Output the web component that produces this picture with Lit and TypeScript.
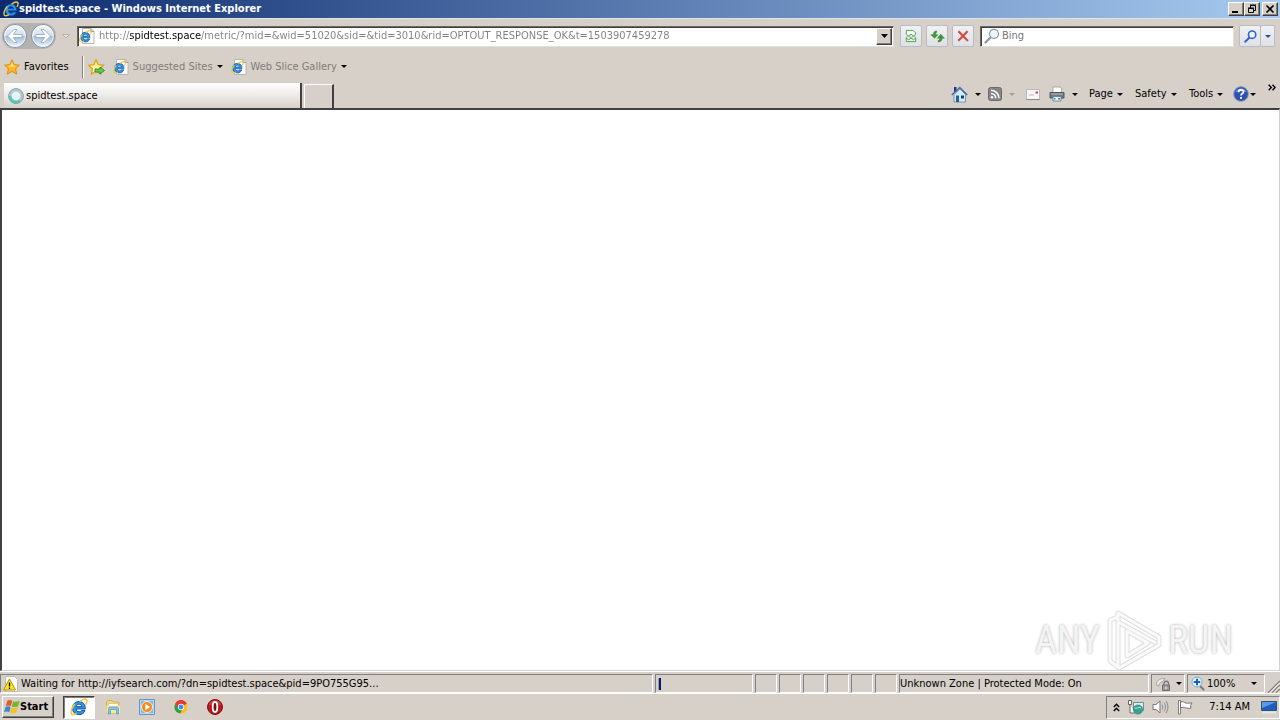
import { LitElement, html, svg, css } from "lit";
import { customElement, state } from "lit/decorators.js";

const icon = (w: number, h: number, body: unknown, vw = w, vh = h) =>
  html`<svg class="ico" width=${w} height=${h} viewBox="0 0 ${vw} ${vh}" aria-hidden="true">${body}</svg>`;

const ieMark = svg`
  <path d="M13.600 9.800H5.400c.2 1.500 1.200 2.400 2.700 2.400 1 0 1.700-.4 2.200-1.100h3c-.8 2.400-2.700 3.700-5.300 3.700C4.600 14.800 2.200 12.500 2.200 9c0-3.400 2.400-5.900 5.800-5.900 3.600 0 5.800 2.600 5.600 6.700zM5.500 7.600h5C10.300 6.300 9.400 5.500 8 5.500s-2.200.8-2.500 2.100z" fill="#2f93e6" stroke="#0b4a98" stroke-width=".8"/>
  <path d="M4.200 5.300C2 8.300.3 12 1.300 14c.8 1.400 2.900.8 4.700-.4M8.500 3.200C11 1.300 13.800.5 14.800 1.700c.7.900.2 2.300-.8 4.100" fill="none" stroke="#f2c938" stroke-width="1.400"/>`;

const ie = (s: number) => icon(s, s, ieMark, 16, 16);

const iePage = () => icon(16, 16, svg`
  <path d="M3.500.5h8.500l3 3v12H3.500z" fill="#fdfdfd" stroke="#b5b5b5"/>
  <path d="M12 .5v3h3" fill="#ddd" stroke="#9a9a9a"/>
  <g transform="translate(-.2 1.800) scale(.82)">${ieMark}</g>`);

const caret = (color = "#000") => icon(6, 3, svg`<path d="M0 0h6L3 3z" fill=${color}/>`);

const starPath = "M8 .8l2.200 4.800 5.200.6-3.800 3.600 1 5.200L8 12.400 3.400 15l1-5.200L.6 6.200l5.200-.6z";
const star = () => icon(16, 16, svg`<path d=${starPath} fill="#fbb829" stroke="#dc8a0c"/><path d="M8 3l1.400 3.500 3.600.5-5 1-4.500-1 3-.5z" fill="#ffe07a"/>`);
const starAdd = () => icon(17, 16, svg`<path d=${starPath} fill="#fff0a0" stroke="#dfa10e" stroke-width="1.200"/><path d="M7 10h5V8l4.500 3.500L12 15v-2H7z" fill="#5ed04e" stroke="#1f7d1c" stroke-width=".8"/>`);

const navCircle = (flip: boolean) => icon(26, 26, svg`
  <defs><linearGradient id="orb" x1="0" y1="0" x2="0" y2="1"><stop offset="0" stop-color="#f4f7fb"/><stop offset=".48" stop-color="#d3dfec"/><stop offset=".52" stop-color="#a5bdd6"/><stop offset="1" stop-color="#edf9ff"/></linearGradient></defs>
  <circle cx="13" cy="13" r="11.500" fill="url(#orb)" stroke="#8590a2"/>
  <circle cx="13" cy="13" r="10.400" fill="none" stroke="#fff" stroke-opacity=".8"/>
  <path transform=${flip ? "translate(26 0) scale(-1 1)" : ""} d="M5.500 13l6.500-6.500h3L11.300 11.500H20v3h-8.700l3.700 5h-3z" fill="#fff" stroke="#8fa3bb" stroke-width=".8"/>`);

const compat = () => icon(12, 14, svg`<path d="M1.500 6V1.500h8l3 3V6l-2.500 2-3-2-3 2zM1.500 10.500L4 12.500l3-2 3 2 2.500-2v4h-11z" fill="#f3fbf0" stroke="#3f9a3c"/><path d="M1 10l3-2 3 2.500 3-2.500 3 2" fill="none" stroke="#64b15c"/>`, 14, 16);
const refresh = () => icon(15, 13, svg`<path d="M7 1C4.500 1 3.500 2.500 3.500 5H.8l4 4L8.600 5H6c0-1.500.2-2 1.500-2.500zM9 13c2.500 0 4-1.500 4-4h2.500L11.500 4.500 7.700 9h2.600c0 1.500-.3 2-1.800 2.500z" fill="#3b9b35" stroke="#1f6f1d" stroke-width=".4"/>`, 16, 14);
const stop = () => icon(12, 12, svg`<path d="M1 2l1.200-1.300L6 4.700 9.800.7 11 2 7.200 6 11.400 10.200 10.200 11.300 6 7.300 2 11.300.8 10 4.800 6z" fill="#d9433b" stroke="#b33a35" stroke-width=".4"/>`);
const lens = (stroke: string, s: number, w = 1.6) => icon(s, s, svg`<path d="M1.500 14.500L6.500 9.500" stroke=${stroke} stroke-width="2.300" stroke-linecap="round"/><circle cx="10" cy="5.800" r="4.500" fill="#eef6fd" stroke=${stroke} stroke-width=${w}/>`, 16, 16);
const spinner = () => icon(16, 16, svg`<circle cx="8" cy="8" r="6" fill="#e8f4f4" stroke="#b3c4cc" stroke-width="3"/><path d="M2 8a6 6 0 0 0 10 4.500" fill="none" stroke="#4fc9b8" stroke-width="2.600"/><circle cx="8" cy="8" r="7.500" fill="none" stroke="#6c9aa6" stroke-width=".7"/>`);

const home = () => icon(17, 17, svg`<path d="M3 1h2.500v5H3z" fill="#2b2f8c"/><path d="M3 8.500L9 3l5.500 5.500V16H3z" fill="#d5ebfa" stroke="#5b87ae" stroke-width=".8"/><path d="M.8 9L8.800 1.500 16.200 9" fill="none" stroke="#4c6ca8" stroke-width="1.600"/><path d="M5 9.500h3V16H5z" fill="#2d5c96"/><path d="M10 9.500h3v3h-3z" fill="#17406f"/>`);
const rss = () => icon(14, 14, svg`<rect x=".5" y=".5" width="13" height="13" rx="2" fill="#858585" stroke="#6c6c6c"/><circle cx="4" cy="10.200" r="1.300" fill="#fff"/><path d="M3 6.500c2.600 0 4.700 2 4.700 4.800M3 3.300c4.500 0 7.900 3.500 7.900 8" fill="none" stroke="#fff" stroke-width="1.500"/>`);
const mail = () => icon(14, 11, svg`<path d="M.5.5h13v10H.5z" fill="#f7f7f7" stroke="#b9b9b9"/><path d="M.5 10.500h13" stroke="#888"/><path d="M9.500 2.500h2.500v2H9.500z" fill="#cf4255"/><path d="M3 6h5" stroke="#bbb"/>`);
const printer = () => icon(16, 16, svg`<path d="M4 1h7l1.500 1.500V7H4z" fill="#fff" stroke="#999" stroke-width=".8"/><path d="M1 6.500h14v5.500H1z" fill="#737b82" stroke="#4e565d"/><path d="M2 8h12" stroke="#b6bdc2"/><path d="M4 10.500h8v4.500H4z" fill="#e5f4ff" stroke="#667887" stroke-width=".8"/><path d="M5 12h1.500v1.500H5zM9 12h2v1.500H9z" fill="#2f87c9"/>`);
const help = () => icon(16, 16, svg`<circle cx="8" cy="8" r="7.300" fill="#2c51b4" stroke="#8794b3"/><path d="M2.500 6a6 6 0 0 1 11 0c-3-1-8-1-11 0z" fill="#7d9ae4"/><path d="M5.600 6.200C5.600 4.600 6.600 3.900 8 3.900s2.500.8 2.500 2C10.500 7.500 8 7.600 8 9.500" fill="none" stroke="#fff" stroke-width="1.700"/><circle cx="8" cy="11.900" r="1.100" fill="#fff"/>`);
const more = () => icon(8, 7, svg`<path d="M.7.7L3.300 3.500.7 6.300M4.500.7l2.600 2.800-2.600 2.800" fill="none" stroke="#000" stroke-width="1.400"/>`);

const warn = () => icon(16, 16, svg`<path d="M3.500.5h9l3 3v12h-12z" fill="#fff" stroke="#bbb"/><path d="M7.500 3L13.500 14H1.500z" fill="#ffe81c" stroke="#b09000" stroke-linejoin="round"/><path d="M7.500 6.500v4M7.500 11.500v1.500" stroke="#000" stroke-width="1.300"/>`);
const lock = () => icon(16, 16, svg`<path d="M1 8.500C2 4 6 2 10 2.500L7 6c-2 0-3 2-3 4z" fill="#e9e9e9" stroke="#999" stroke-width=".8"/><path d="M9 9V7.500a2.200 2.200 0 0 1 4.500 0V9" fill="none" stroke="#777" stroke-width="1.300"/><path d="M7.500 9h7v5.500h-7z" fill="#999" stroke="#6f6f6f"/><path d="M11 10.500v2.500" stroke="#fff"/>`);
const zoomPlus = () => icon(14, 15, svg`<path d="M8.500 9.500l4 4" stroke="#7c7c7c" stroke-width="2.200" stroke-linecap="round"/><circle cx="6" cy="6" r="5" fill="#e4f2fd" stroke="#78a8d6"/><path d="M6 2.800v6.400M2.800 6h6.400" stroke="#145fbd" stroke-width="2"/>`);
const grip = () => icon(13, 13, svg`<path d="M1 13L13 1M5 13l8-8M9 13l4-4" stroke="#858078" stroke-width="1.500"/><path d="M2.500 13L13 2.500M6.500 13L13 6.500M10.500 13l2.500-2.500" stroke="#fff"/>`);

const winFlag = () => icon(16, 16, svg`<path d="M3.300 1.800C5 .8 6.800 1 8.300 1.800L6.900 7C5.300 6.200 3.500 6.200 1.800 7z" fill="#e9592b"/><path d="M9.100 2.200c2 1 4 .9 6.600-.4l-1.500 5.400c-2.200 1.100-4.500 1.100-6.500.2z" fill="#72b92c"/><path d="M1.500 8c1.800-.9 3.600-.9 5.100-.1l-1.400 5.300c-1.600-.9-3.400-.9-5.200 0z" fill="#3b86d6"/><path d="M7.400 8.400c2 1 4.300.9 6.500-.2l-1.500 5.300c-2.200 1.100-4.400 1.100-6.400.1z" fill="#f6c21c"/>`);
const folder = () => icon(16, 16, svg`<path d="M1.500 3.500L3 1.500h4l1 1.500h6v11h-12.500z" fill="#f6d976" stroke="#c9a544" stroke-width=".8"/><path d="M3.500 4.500h9.500v3H3.500z" fill="#fff" stroke="#c9b676" stroke-width=".6"/><path d="M1.500 6.500h13.500V14H1.500z" fill="#fbe89f"/><path d="M3.500 15V9.500c0-1 .7-1.500 1.500-1.500h7c.8 0 1.500.5 1.500 1.500V15h-2v-4.500h-6V15z" fill="#86c5ea" stroke="#4f9ac9" stroke-width=".7"/>`);
const media = () => icon(16, 16, svg`<path d="M.5.5h15v15H.5z" fill="#b9dcf6" stroke="#5c97c8"/><path d="M2 2h12v12H2z" fill="#7fb7e2"/><circle cx="8" cy="8" r="5.500" fill="#f58a16" stroke="#fff" stroke-width=".8"/><path d="M6.300 4.800L11.200 8l-4.900 3.200z" fill="#fff"/>`);
const chrome = () => icon(14, 14, svg`<circle cx="8" cy="8" r="7.500" fill="#fbc116"/><path d="M8 8L1.500 4.250A7.500 7.500 0 0 1 14.500 4.250z" fill="#e33b2e"/><path d="M1.500 4.250A7.500 7.500 0 0 0 7 15.450L10.500 9.500 8 8z" fill="#2aa24c"/><path d="M8 4.300h6.500a7 7 0 0 0-13-.05L5 10z" fill="#e33b2e"/><circle cx="8" cy="8" r="3.600" fill="#fff"/><circle cx="8" cy="8" r="2.800" fill="#4688f1"/>`, 16, 16);
const opera = () => icon(16, 16, svg`<circle cx="8" cy="8" r="7.500" fill="#b61a1e" stroke="#861013"/><path d="M2 6a6.300 6.300 0 0 1 12 0z" fill="#dd5a58" opacity=".6"/><ellipse cx="8" cy="8" rx="2.300" ry="5" fill="#7c0c10" stroke="#fff" stroke-width="1.800"/>`);

const net = () => icon(16, 16, svg`<path d="M5.500 3.500h10v8h-10z" fill="#ddf1f2" stroke="#6e8c90"/><path d="M.5 1.500h3v4h-3zM2 5.500V14h5" fill="#fff" stroke="#666"/><circle cx="10" cy="10.500" r="4.600" fill="#38a390" stroke="#277b70" stroke-width=".6"/><path d="M6.500 9c2 1.500 4-2 6.500 0" stroke="#c9eee1" fill="none"/>`);
const speaker = () => icon(17, 16, svg`<path d="M1 5.500h3L8 2v12l-4-3.500H1z" fill="#fff" stroke="#777"/><path d="M10 5.500c1 1.500 1 3.500 0 5M12 3.500c2 2.700 2 6.300 0 9M14 2c2.600 3.500 2.600 8.500 0 12" fill="none" stroke="#888"/>`);
const flag = () => icon(16, 16, svg`<path d="M1.500 1.500h2V15h-2z" fill="#fff" stroke="#666" stroke-width=".8"/><path d="M3.500 3c2.500-1 4 .5 5.500 1s3.500 0 6 0l-1.500 2.500L14 9c-2.500.8-4 .2-5.500-.3S6 8 3.500 8.700z" fill="#fff" stroke="#666" stroke-width=".9"/>`);
const desktop = () => icon(16, 14, svg`<path d="M.5 1.500h15v9H.5z" fill="#1d5fc0" stroke="#3d4d63"/><path d="M1 2h14L1 8z" fill="#5b9ce8"/><path d="M1 12.500h14" stroke="#dfe6ee" stroke-width="2"/>`);
const emblem = "M13 4L54 28v8L14 59 5 52V11l8-3zM13 4v54M13 13l38 21M22 22v25l21-13z";

@customElement("app-root")
export class AppRoot extends LitElement {
  @state() private address =
    "http://spidtest.space/metric/?mid=&wid=51020&sid=&tid=3010&rid=OPTOUT_RESPONSE_OK&t=1503907459278";

  static styles = css`
    :host { display: flex; flex-direction: column; height: 100vh; overflow: hidden; background: #d6d0c8;
      color: #000; font: 11px/14px "DejaVu Sans Condensed", "DejaVu Sans", sans-serif; }
    * { box-sizing: border-box; }
    button, input { font: inherit; color: inherit; margin: 0; padding: 0; border: 0; background: none; border-radius: 0; }
    button { display: flex; align-items: center; white-space: nowrap; }
    .ico { display: block; flex: none; }
    input { outline: none; min-width: 0; }

    .title { display: flex; align-items: center; height: 18px; padding: 0 2px 0 3px; color: #fff; font-weight: bold;
      background: linear-gradient(90deg, #0c2b6f, #a6caf0); }
    .title h1 { flex: 1; margin: 0; font: inherit; }
    .win { display: flex; }
    .win button { width: 16px; height: 14px; justify-content: center; background: #d6d0c8; border: 1px solid;
      border-color: #fff #404040 #404040 #fff; box-shadow: inset -1px -1px #808080; }
    .win .close { margin-left: 2px; }

    .nav { display: flex; align-items: center; height: 35px; padding: 0 5px 0 2px; border-top: 1px solid #dfe5ee; }
    .orbs { display: flex; gap: 2px; border-radius: 14px; background: #b5b2b3; }
    .history { padding: 0 7px 0 6px; }
    .address, .search { display: flex; align-items: center; height: 21px; background: #fff; border: 1px solid;
      border-color: #6b6862 #e2ded8 #e2ded8 #6b6862; box-shadow: inset 1px 1px #404040; }
    .address { flex: 1; padding: 1px 1px 1px 1px; gap: 4px; }
    .address input { flex: 1; color: transparent; -webkit-background-clip: text; background-clip: text;
      background-image: linear-gradient(90deg, #808080 30px, #000 30px 102px, #808080 102px); }
    .drop { width: 16px; height: 17px; justify-content: center; background: #d6d0c8; border: 1px solid;
      border-color: #fff #404040 #404040 #fff; box-shadow: inset -1px -1px #808080; }
    .tools { display: flex; gap: 4px; padding: 0 6px; }
    .tool { width: 22px; height: 22px; justify-content: center; border: 1px solid #b9bcc2; border-radius: 2px;
      background: linear-gradient(#f1f1f3, #dfe1e6); }
    .search { width: 254px; padding: 1px 3px; gap: 2px; }
    .search input { flex: 1; }
    .search input::placeholder { color: #777; opacity: 1; }
    .go { display: flex; margin-left: 5px; }
    .go .tool + .tool { width: 14px; border-left: 0; }

    .favs { display: flex; align-items: center; height: 27px; padding: 0 4px; color: #807c77; }
    .favs button { gap: 4px; }
    .favs .main { color: #000; padding-right: 13px; }
    .favs .links { display: flex; align-items: center; height: 22px; border-left: 1px solid #808080;
      box-shadow: inset 1px 0 #fff; padding-left: 5px; gap: 8px; }

    .tabs { display: flex; align-items: flex-end; height: 28px; padding: 0 4px; }
    .tab { width: 298px; height: 25px; padding-left: 4px; gap: 2px; border-right: 2px solid #404040;
      background: linear-gradient(#fff, #e9e6e2 60%, #d6d0c8); }
    .newtab { width: 30px; height: 24px; margin-left: 2px; border: 1px solid #fff; border-right: 2px solid #404040; border-bottom: 0; }
    .cmds { display: grid; grid-template-columns: 37px 38px 23px 40px 46px 54px 44px 35px 8px; margin-left: auto;
      height: 28px; align-items: center; }
    .cmds button { gap: 4px; }
    .cmds .wide { gap: 7px; }
    .cmds .tight { gap: 1px; }
    .cmds .more { align-self: start; padding-top: 4px; }

    .view { position: relative; flex: 1; min-height: 0; background: #fff; border: 1px solid #808080;
      border-top: 2px solid #404040; border-left: 2px solid #404040; border-right-color: #d6d0c8; border-bottom-color: #d6d0c8; }
    .mark { position: absolute; right: 46px; bottom: -1px; display: flex; align-items: center; gap: 5px; color: #f4f4f4;
      font: 38px/60px "Roboto Condensed", "Liberation Sans Narrow", "Liberation Sans", sans-serif;
      text-shadow: 0 0 3px #aaa; }

    .status { display: grid; grid-template-columns: minmax(0, 1fr) 98px repeat(6, 22px) 250px 34px 78px 13px; column-gap: 2px;
      height: 22px; padding: 2px 0 0; border-top: 1px solid #fff; }
    .pane { display: flex; align-items: center; gap: 3px; min-width: 0; overflow: hidden; white-space: nowrap;
      border: 1px solid; border-color: #808080 #fff #fff #808080; }
    .pane.first { padding-left: 1px; }
    .pane.part { padding-left: 3px; }
    .pane button { gap: 5px; width: 100%; }
    .pane .zoom { justify-content: space-between; padding-right: 7px; }
    .zoom span { display: flex; align-items: center; gap: 2px; }
    .bar { width: 2px; height: 12px; background: #101a55; box-shadow: -1px 0 #8e98d4; }
    .grip { align-self: end; }

    .task { display: flex; align-items: center; height: 27px; padding: 1px 0 1px 2px; border-top: 1px solid #fff; }
    .start { height: 22px; width: 52px; padding-left: 1px; font-weight: bold; border: 1px solid;
      border-color: #fff #404040 #404040 #fff; box-shadow: inset -1px -1px #808080; }
    .apps { display: flex; gap: 2px; margin-left: 9px; }
    .apps button { width: 32px; height: 23px; justify-content: center; }
    .apps .on { background: #fff; border: 1px solid; border-color: #404040 #fff #fff #404040; box-shadow: inset 1px 1px #808080; }
    .tray { display: flex; align-items: center; gap: 8px; height: 23px; margin-left: auto; padding: 0 2px 0 6px; border: 1px solid;
      border-color: #808080 #fff #fff #808080; }
    .tray time { padding: 0 3px 0 8px; }
  `;

  private edit(e: Event) {
    this.address = (e.target as HTMLInputElement).value;
  }

  render() {
    return html`
      <header class="title">
        ${ie(16)}
        <h1>spidtest.space - Windows Internet Explorer</h1>
        <div class="win">
          <button aria-label="Minimize">${icon(10, 10, svg`<path d="M1 7h6v2H1z"/>`)}</button>
          <button aria-label="Restore">${icon(10, 10, svg`<path d="M3.500 4V1.500h5v5H7M3 1h6M1.500 4.500h5v4h-5zM1 4h6" fill="none" stroke="#000"/>`)}</button>
          <button class="close" aria-label="Close">${icon(10, 10, svg`<path d="M1.500 1.500l7 7M8.500 1.500l-7 7" stroke="#000" stroke-width="1.700"/>`)}</button>
        </div>
      </header>

      <nav class="nav">
        <div class="orbs">
          <button aria-label="Back">${navCircle(false)}</button>
          <button aria-label="Forward">${navCircle(true)}</button>
        </div>
        <button class="history" aria-label="Recent pages">${icon(8, 5, svg`<path d="M.5.5h7L4 4z" fill="#e6e2dc" stroke="#aaa69f" stroke-width=".8"/>`)}</button>
        <div class="address">
          ${iePage()}
          <input aria-label="Address" spellcheck="false" .value=${this.address} @input=${this.edit} />
          <button class="drop" aria-label="Show addresses">${icon(7, 4, svg`<path d="M0 0h7L3.500 4z"/>`)}</button>
        </div>
        <div class="tools">
          <button class="tool" aria-label="Compatibility view">${compat()}</button>
          <button class="tool" aria-label="Refresh">${refresh()}</button>
          <button class="tool" aria-label="Stop">${stop()}</button>
        </div>
        <div class="search">
          ${lens("#8b98a6", 16, 1.2)}
          <input aria-label="Search" placeholder="Bing" />
        </div>
        <div class="go">
          <button class="tool" aria-label="Search">${lens("#2a63cf", 13, 2)}</button>
          <button class="tool" aria-label="Search options">${caret("#1f4fa8")}</button>
        </div>
      </nav>

      <div class="favs">
        <button class="main">${star()}Favorites</button>
        <div class="links">
          <button aria-label="Add to favorites bar">${starAdd()}</button>
          <button>${iePage()}Suggested Sites ${caret()}</button>
          <button>${iePage()}Web Slice Gallery ${caret()}</button>
        </div>
      </div>

      <div class="tabs">
        <button class="tab">${spinner()}spidtest.space</button>
        <button class="newtab" aria-label="New tab"></button>
        <div class="cmds">
          <button class="wide" aria-label="Home">${home()}${caret()}</button>
          <button class="wide" aria-label="Feeds">${rss()}${caret("#a39e97")}</button>
          <button aria-label="Read mail">${mail()}</button>
          <button class="wide" aria-label="Print">${printer()}${caret()}</button>
          <button>Page ${caret()}</button>
          <button>Safety ${caret()}</button>
          <button>Tools ${caret()}</button>
          <button class="tight" aria-label="Help">${help()}${caret()}</button>
          <button class="more" aria-label="More">${more()}</button>
        </div>
      </div>

      <main class="view">
        <div class="mark">
          <span>ANY</span>
          ${icon(58, 62, svg`
            <g fill="none" stroke-linejoin="round">
              <path d=${emblem} stroke="#dedede" stroke-width="5"/>
              <path d=${emblem} stroke="#fafafa" stroke-width="3"/>
            </g>`)}
          <span>RUN</span>
        </div>
      </main>

      <footer class="status">
        <span class="pane first">${warn()}Waiting for http://iyfsearch.com/?dn=spidtest.space&amp;pid=9PO755G95...</span>
        <span class="pane part"><span class="bar"></span></span>
        ${[1, 2, 3, 4, 5, 6].map(() => html`<span class="pane"></span>`)}
        <span class="pane">Unknown Zone | Protected Mode: On</span>
        <span class="pane part"><button aria-label="Privacy">${lock()}${caret()}</button></span>
        <span class="pane part"><button class="zoom"><span>${zoomPlus()}100%</span>${caret()}</button></span>
        <span class="grip">${grip()}</span>
      </footer>

      <footer class="task">
        <button class="start">${winFlag()}Start</button>
        <div class="apps">
          <button class="on" aria-label="Internet Explorer">${ie(18)}</button>
          <button aria-label="Explorer">${folder()}</button>
          <button aria-label="Media Player">${media()}</button>
          <button aria-label="Chrome">${chrome()}</button>
          <button aria-label="Opera">${opera()}</button>
        </div>
        <div class="tray">
          <button aria-label="Show hidden icons">${icon(7, 9, svg`<path d="M.8 4L3.500 1.300 6.200 4M.8 8l2.700-2.700L6.200 8" fill="none" stroke="#000" stroke-width="1.400"/>`)}</button>
          <button aria-label="Network">${net()}</button>
          <button aria-label="Volume">${speaker()}</button>
          <button aria-label="Action Center">${flag()}</button>
          <time>7:14 AM</time>
          <button aria-label="Show desktop">${desktop()}</button>
        </div>
      </footer>
    `;
  }
}
